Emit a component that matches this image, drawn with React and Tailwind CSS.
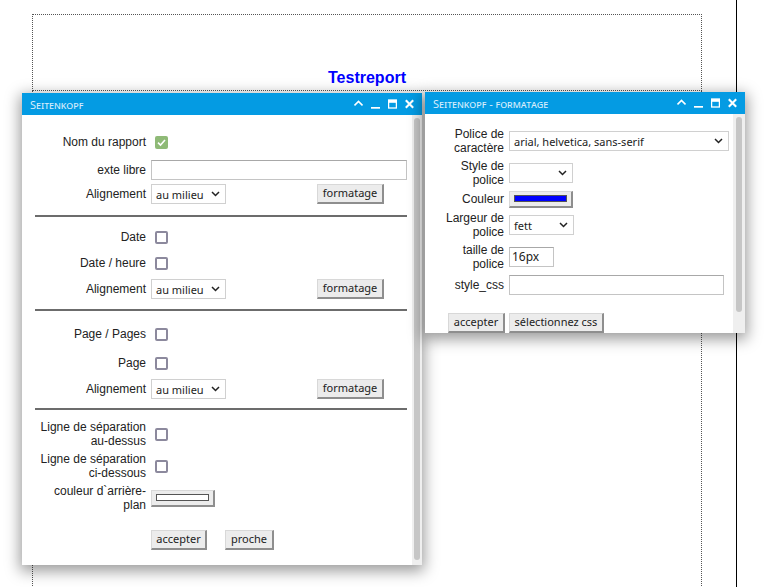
import React from 'react';

// ── Report designer: header settings dialogs ─────────────────
const LABEL = "font-['Liberation_Sans',Arial,sans-serif] text-[12px] leading-[14px] text-[#222] text-right";
const CTRL = "font-['Noto_Sans',sans-serif] text-[11px] text-[#222]";

function TitleBar({ title }) {
  return (
    <div className="flex h-[22px] items-center bg-[#049be3] pl-[8px] pr-[8px]">
      <span className="flex-1 pt-[1px] font-['Noto_Sans',sans-serif] text-[11px] leading-none text-[#d6ecfc] [font-variant:small-caps]">
        {title}
      </span>
      <div className="flex items-center gap-[8px]">
        <svg width="9" height="10" viewBox="0 0 9 10">
          <path d="M0.5 6.5 L4.5 2.5 L8.5 6.5" stroke="white" strokeWidth="1.6" fill="none" />
        </svg>
        <svg width="9" height="10" viewBox="0 0 9 10">
          <rect x="0" y="8" width="9" height="1.7" fill="white" />
        </svg>
        <svg width="9" height="10" viewBox="0 0 9 10">
          <rect x="0.6" y="1" width="7.8" height="8" stroke="white" strokeWidth="1.3" fill="none" />
          <rect x="0.6" y="1" width="7.8" height="2.8" fill="white" />
        </svg>
        <svg width="9" height="10" viewBox="0 0 9 10">
          <path d="M0.8 1.3 L8.2 8.7 M8.2 1.3 L0.8 8.7" stroke="white" strokeWidth="2.1" fill="none" />
        </svg>
      </div>
    </div>
  );
}

function Scroll({ track, thumb }) {
  return (
    <div className={`flex shrink-0 justify-center bg-[#efefef] pt-[3px] ${track}`}>
      <div className={`w-[6px] rounded-full bg-[#c6c6c6] ${thumb}`} />
    </div>
  );
}

function Check({ on }) {
  if (on) {
    return (
      <span className="ml-[4px] flex h-[13px] w-[13px] items-center justify-center rounded-[2px] bg-[#8fba77]">
        <svg width="9" height="9" viewBox="0 0 9 9">
          <path d="M1 4.6 L3.5 7 L8 2" stroke="white" strokeWidth="1.6" fill="none" />
        </svg>
      </span>
    );
  }
  return <span className="ml-[4px] h-[13px] w-[13px] rounded-[2px] border-2 border-[#8c899d] bg-white" />;
}

function Select({ value, className = '' }) {
  return (
    <div className={`flex h-[20px] items-center justify-between border border-[#d0d0d0] bg-white pl-[4px] pr-[5px] ${CTRL} ${className}`}>
      <span className="leading-none">{value}</span>
      <svg width="9" height="6" viewBox="0 0 9 6">
        <path d="M1 1 L4.5 4.5 L8 1" stroke="#222" strokeWidth="1.5" fill="none" />
      </svg>
    </div>
  );
}

function Input({ value = '', className = '' }) {
  return (
    <div className={`flex h-[20px] items-center border border-[#c4c4c4] border-t-[#a8a8a8] bg-white px-[2px] ${CTRL} text-[12px] ${className}`}>
      {value}
    </div>
  );
}

function Btn({ children, className = '' }) {
  return (
    <div className={`flex h-[20px] items-center justify-center border border-[#d8d8d8] border-b-2 border-r-2 border-b-[#8e8e8e] border-r-[#8e8e8e] bg-[#ececec] ${CTRL} ${className}`}>
      {children}
    </div>
  );
}

function ColorBtn({ color }) {
  return (
    <div className="flex h-[17px] w-[64px] items-center justify-center border border-[#d8d8d8] border-b-2 border-r-2 border-b-[#8e8e8e] border-r-[#8e8e8e] bg-[#ececec]">
      <div className={`h-[7px] w-[53px] border border-[#555] ${color}`} />
    </div>
  );
}

function Row1({ label, children, className = 'h-[26px]' }) {
  return (
    <div className={`flex items-center ${className}`}>
      <div className={`w-[124px] shrink-0 ${LABEL}`}>{label}</div>
      <div className="ml-[5px] flex items-center">{children}</div>
    </div>
  );
}

function Row2({ label, children, className = 'h-[28px]' }) {
  return (
    <div className={`flex items-center ${className}`}>
      <div className={`w-[79px] shrink-0 ${LABEL}`}>{label}</div>
      <div className="ml-[5px] flex items-center">{children}</div>
    </div>
  );
}

function Rule({ className }) {
  return <div className={`ml-[13px] h-[2px] w-[372px] bg-[#6c6c6c] ${className}`} />;
}

function AlignRow({ className }) {
  return (
    <Row1 label="Alignement" className={`h-[22px] ${className}`}>
      <Select value="au milieu" className="w-[75px]" />
      <Btn className="ml-[91px] w-[67px]">formatage</Btn>
    </Row1>
  );
}

export default function App() {
  return (
    <div className="relative h-[587px] w-[766px] overflow-hidden bg-white">
      {/* Report canvas */}
      <div className="absolute left-[32px] top-[14px] flex h-[77px] w-[670px] items-end justify-center border border-dotted border-[#555] pb-[3px]">
        <span className="font-['Liberation_Sans',Arial,sans-serif] text-[16px] font-bold leading-[18px] text-[#0000ff]">
          Testreport
        </span>
      </div>
      <div className="absolute left-[32px] top-[90px] h-[520px] w-[670px] border-x border-dotted border-[#555]" />
      <div className="absolute left-[736px] top-0 h-full w-px bg-black" />

      {/* Seitenkopf dialog */}
      <div className="absolute left-[22px] top-[93px] w-[400px] shadow-[0_4px_14px_2px_rgba(0,0,0,0.4)]">
        <TitleBar title="Seitenkopf" />
        <div className="flex h-[450px] bg-white">
          <div className="flex-1 pt-[14px]">
            <Row1 label="Nom du rapport">
              <Check on />
            </Row1>
            <Row1 label="exte libre" className="mt-[3px] h-[24px]">
              <Input className="w-[256px]" />
            </Row1>
            <AlignRow className="mt-[1px]" />
            <Rule className="mt-[10px]" />

            <Row1 label="Date" className="mt-[7px] h-[26px]">
              <Check />
            </Row1>
            <Row1 label="Date / heure">
              <Check />
            </Row1>
            <AlignRow className="mt-[2px]" />
            <Rule className="mt-[9px]" />

            <Row1 label="Page / Pages" className="mt-[10px] h-[26px]">
              <Check />
            </Row1>
            <Row1 label="Page" className="mt-[3px] h-[26px]">
              <Check />
            </Row1>
            <AlignRow className="mt-[2px]" />
            <Rule className="mt-[8px]" />

            <Row1 label={<>Ligne de séparation<br />au-dessus</>} className="mt-[10px] h-[28px]">
              <Check />
            </Row1>
            <Row1 label={<>Ligne de séparation<br />ci-dessous</>} className="mt-[4px] h-[28px]">
              <Check />
            </Row1>
            <Row1 label={<>couleur d`arrière-<br />plan</>} className="mt-[4px] h-[28px]">
              <ColorBtn color="bg-white" />
            </Row1>

            <div className="ml-[129px] mt-[18px] flex">
              <Btn className="w-[56px]">accepter</Btn>
              <Btn className="ml-[18px] w-[49px]">proche</Btn>
            </div>
          </div>
          <Scroll track="w-[10px]" thumb="h-[442px]" />
        </div>
      </div>

      {/* Formatage dialog */}
      <div className="absolute left-[425px] top-[92px] w-[320px] shadow-[0_4px_14px_2px_rgba(0,0,0,0.4)]">
        <TitleBar title="Seitenkopf - formatage" />
        <div className="flex h-[219px] overflow-hidden bg-white">
          <div className="flex-1 overflow-hidden pt-[13px]">
            <Row2 label={<>Police de<br />caractère</>}>
              <Select value="arial, helvetica, sans-serif" className="w-[220px]" />
            </Row2>
            <Row2 label={<>Style de<br />police</>} className="mt-[4px] h-[28px]">
              <Select value="" className="w-[64px]" />
            </Row2>
            <Row2 label="Couleur" className="mt-[2px] h-[20px]">
              <ColorBtn color="bg-[#0000ff]" />
            </Row2>
            <Row2 label={<>Largeur de<br />police</>} className="mt-[2px] h-[28px]">
              <Select value="fett" className="w-[65px]" />
            </Row2>
            <Row2 label={<>taille de<br />police</>} className="mt-[4px] h-[28px]">
              <Input value="16px" className="w-[45px]" />
            </Row2>
            <Row2 label="style_css" className="mt-[3px] h-[22px]">
              <Input className="w-[215px]" />
            </Row2>
            <div className="mt-[17px] flex">
              <Btn className="ml-[23px] w-[57px]">accepter</Btn>
              <Btn className="ml-[4px] w-[95px]">sélectionnez css</Btn>
            </div>
          </div>
          <Scroll track="w-[12px]" thumb="h-[195px]" />
        </div>
      </div>
    </div>
  );
}
